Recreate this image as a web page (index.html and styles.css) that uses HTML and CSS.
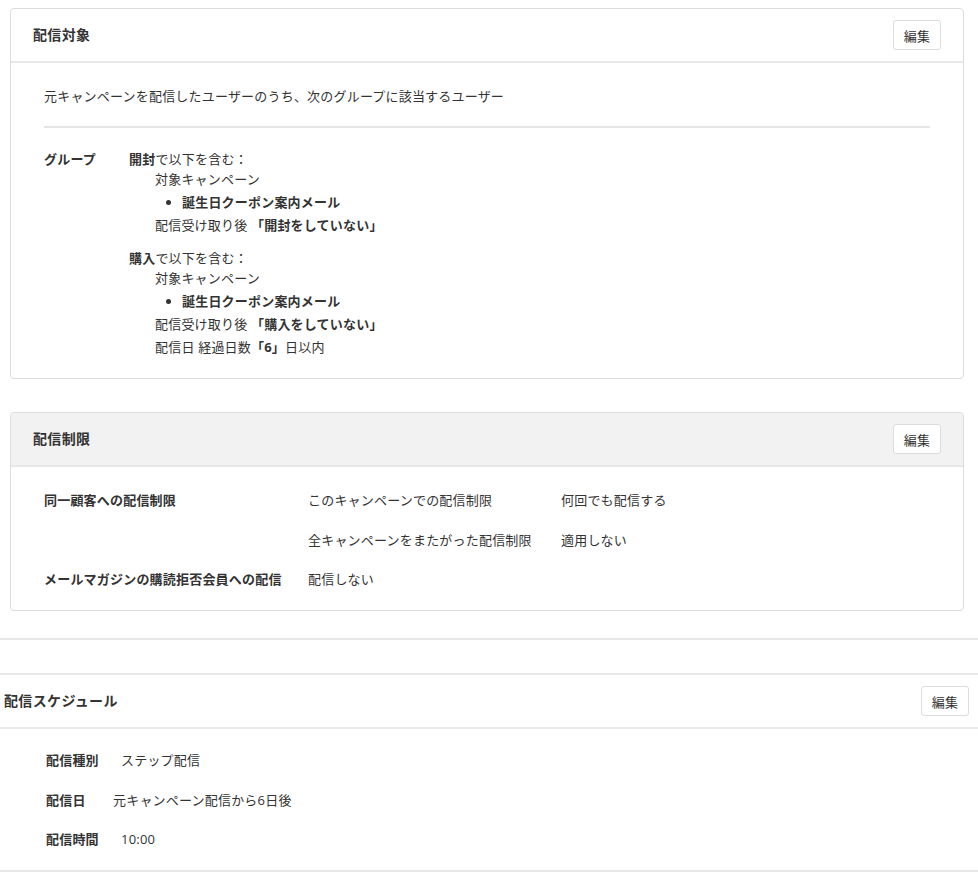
FILE: index.html
```html
<!DOCTYPE html>
<html lang="ja">
<head>
<meta charset="utf-8">
<title>配信設定</title>
<link rel="stylesheet" href="styles.css">
</head>
<body>
<div class="page">
  <section class="card">
    <div class="card-head">
      <h2 class="card-title">配信対象</h2>
      <button class="btn">編集</button>
    </div>
    <div class="card-body target-body">
      <p class="lead">元キャンペーンを配信したユーザーのうち、次のグループに該当するユーザー</p>
      <hr class="sep">
      <div class="group">
        <div class="group-label">グループ</div>
        <div class="group-content">
          <div class="cond">
            <div class="cond-head"><b>開封</b>で以下を含む：</div>
            <div class="cond-detail">
              <div class="line">対象キャンペーン</div>
              <ul class="camp-list"><li>誕生日クーポン案内メール</li></ul>
              <div class="line">配信受け取り後 <b>「開封をしていない」</b></div>
            </div>
          </div>
          <div class="cond">
            <div class="cond-head"><b>購入</b>で以下を含む：</div>
            <div class="cond-detail">
              <div class="line">対象キャンペーン</div>
              <ul class="camp-list"><li>誕生日クーポン案内メール</li></ul>
              <div class="line">配信受け取り後 <b>「購入をしていない」</b></div>
              <div class="line">配信日 経過日数<b>「6」</b>日以内</div>
            </div>
          </div>
        </div>
      </div>
    </div>
  </section>

  <section class="card card-limit">
    <div class="card-head gray">
      <h2 class="card-title">配信制限</h2>
      <button class="btn">編集</button>
    </div>
    <div class="card-body limit-body">
      <div class="limit-grid">
        <div class="lbl">同一顧客への配信制限</div>
        <div>このキャンペーンでの配信制限</div>
        <div>何回でも配信する</div>
        <div></div>
        <div>全キャンペーンをまたがった配信制限</div>
        <div>適用しない</div>
        <div class="lbl">メールマガジンの購読拒否会員への配信</div>
        <div>配信しない</div>
        <div></div>
      </div>
    </div>
  </section>
</div>

<section class="schedule">
  <div class="schedule-spacer"></div>
  <div class="schedule-head">
    <h2 class="card-title">配信スケジュール</h2>
    <button class="btn">編集</button>
  </div>
  <div class="schedule-body">
    <div class="srow"><span class="slbl">配信種別</span><span class="sval">ステップ配信</span></div>
    <div class="srow"><span class="slbl">配信日</span><span class="sval sval-date">元キャンペーン配信から6日後</span></div>
    <div class="srow"><span class="slbl">配信時間</span><span class="sval">10:00</span></div>
  </div>
</section>
</body>
</html>
```

FILE: styles.css
```css
* { box-sizing: border-box; }
html, body {
  margin: 0;
  padding: 0;
  background: #fff;
}
body {
  font-family: "Open Sans", "Noto Sans CJK JP", sans-serif;
  font-size: 13px;
  color: #333;
  line-height: 20px;
  letter-spacing: 0.2px;
}
b { font-weight: 700; }
.page {
  padding: 8px 15px 0 10px;
}
.card {
  width: 954px;
  border: 1px solid #dcdcdc;
  border-radius: 4px;
  background: #fff;
}
.card-limit {
  margin-top: 33px;
}
.card-head {
  display: flex;
  align-items: center;
  justify-content: space-between;
  padding: 11px 22px 11px 22px;
  border-bottom: 2px solid #e8e8e8;
}
.card-head.gray {
  background: #f2f2f2;
  border-radius: 4px 4px 0 0;
}
.card-title {
  margin: 0;
  font-size: 14px;
  font-weight: 700;
  color: #333;
  line-height: 20px;
  letter-spacing: 0.35px;
}
.btn {
  height: 30px;
  width: 48px;
  padding: 0;
  border: 1px solid #dcdcdc;
  border-radius: 3px;
  background: #fff;
  font-family: "Open Sans", "Noto Sans CJK JP", sans-serif;
  font-size: 13px;
  letter-spacing: 0.2px;
  color: #333;
  cursor: pointer;
}
.target-body {
  padding: 23px 33px 19px 33px;
}
.lead {
  margin: 0;
}
.sep {
  margin: 20px 0 22px 0;
  border: 0;
  height: 2px;
  background: #e5e5e5;
}
.group {
  display: flex;
}
.group-label {
  width: 85px;
  font-weight: 700;
  line-height: 18px;
}
.cond + .cond {
  margin-top: 12px;
}
.cond-head {
  line-height: 18px;
}
.cond-detail {
  padding-left: 26px;
}
.line {
  line-height: 23px;
}
.camp-list {
  margin: 0;
  padding-left: 27px;
  font-weight: 700;
  line-height: 23px;
}
.limit-body {
  padding: 23px 33px 21px 33px;
}
.limit-grid {
  display: grid;
  grid-template-columns: 264px 253px 1fr;
  row-gap: 19.5px;
}
.lbl {
  font-weight: 700;
}
.schedule {
  margin-top: 27px;
  border-top: 2px solid #e8e8e8;
}
.schedule-spacer {
  height: 35px;
  border-bottom: 2px solid #e8e8e8;
}
.schedule-head {
  display: flex;
  align-items: center;
  justify-content: space-between;
  padding: 11px 9px 11px 4px;
  border-bottom: 2px solid #e8e8e8;
}
.schedule-body {
  padding: 21px 0 21px 46px;
  border-bottom: 2px solid #e8e8e8;
  display: flex;
  flex-direction: column;
  gap: 19.5px;
}
.srow {
  display: flex;
}
.slbl {
  font-weight: 700;
  width: 75px;
}
.sval-date {
  margin-left: -8px;
}
```
